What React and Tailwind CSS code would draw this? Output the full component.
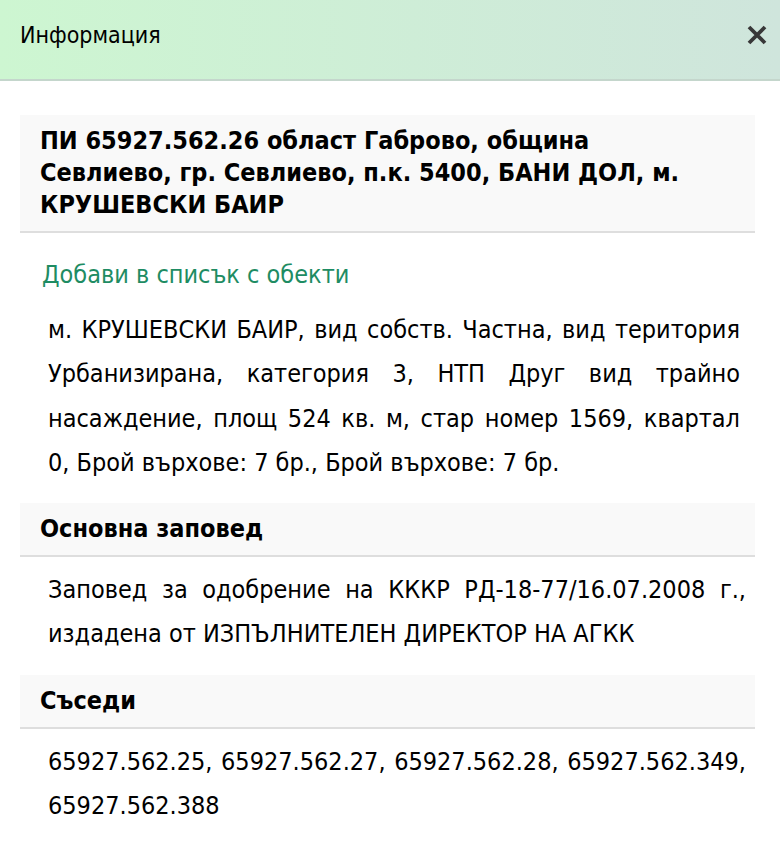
import React from 'react';

const font = { fontFamily: '"DejaVu Sans Condensed", Tahoma, "DejaVu Sans", sans-serif' };

function SectionTitle({ children }) {
  return (
    <div className="ml-5 mr-[25px] bg-[#f9f9f9] border-b-2 border-[#dedede] pl-5 pr-[36px] py-[10px] font-bold text-[25px] leading-[32px] text-black">
      {children}
    </div>
  );
}

function Paragraph({ children, className = 'mr-[34px]' }) {
  return (
    <p className={`ml-[48px] pt-[11px] pb-[18px] text-[25px] leading-[44.3px] text-black text-justify ${className}`}>
      {children}
    </p>
  );
}

export default function App() {
  return (
    <div className="w-[780px] min-h-[860px] bg-white" style={font}>
      <div className="h-[81px] flex items-start justify-between pl-5 pr-[13px] pt-[19px] bg-gradient-to-r from-[#cdf6d1] to-[#cfe5dc] border-b-2 border-[#c4d6cc]">
        <span className="text-[23px] leading-[32px] text-black">Информация</span>
        <button className="w-5 h-8 flex items-center justify-center">
          <svg width="20" height="20" viewBox="0 0 20 20">
            <path d="M2 2 L18 18 M18 2 L2 18" stroke="#383838" strokeWidth="3.8" />
          </svg>
        </button>
      </div>

      <div className="pt-[34px]">
        <SectionTitle>
          ПИ 65927.562.26 област Габрово, община Севлиево, гр. Севлиево, п.к. 5400, БАНИ ДОЛ, м. КРУШЕВСКИ БАИР
        </SectionTitle>

        <div className="px-[42px] pt-[26px] pb-[6px] text-[25px] leading-[32px] text-[#1e8c63]">
          Добави в списък с обекти
        </div>

        <Paragraph className="mr-[40px]">
          м. КРУШЕВСКИ БАИР, вид собств. Частна, вид територия Урбанизирана, категория 3, НТП Друг вид трайно насаждение, площ 524 кв. м, стар номер 1569, квартал 0, Брой върхове: 7 бр., Брой върхове: 7 бр.
        </Paragraph>

        <SectionTitle>Основна заповед</SectionTitle>
        <Paragraph>
          Заповед за одобрение на КККР РД-18-77/16.07.2008 г., издадена от ИЗПЪЛНИТЕЛЕН ДИРЕКТОР НА АГКК
        </Paragraph>

        <SectionTitle>Съседи</SectionTitle>
        <Paragraph>
          65927.562.25, 65927.562.27, 65927.562.28, 65927.562.349, 65927.562.388
        </Paragraph>
      </div>
    </div>
  );
}
